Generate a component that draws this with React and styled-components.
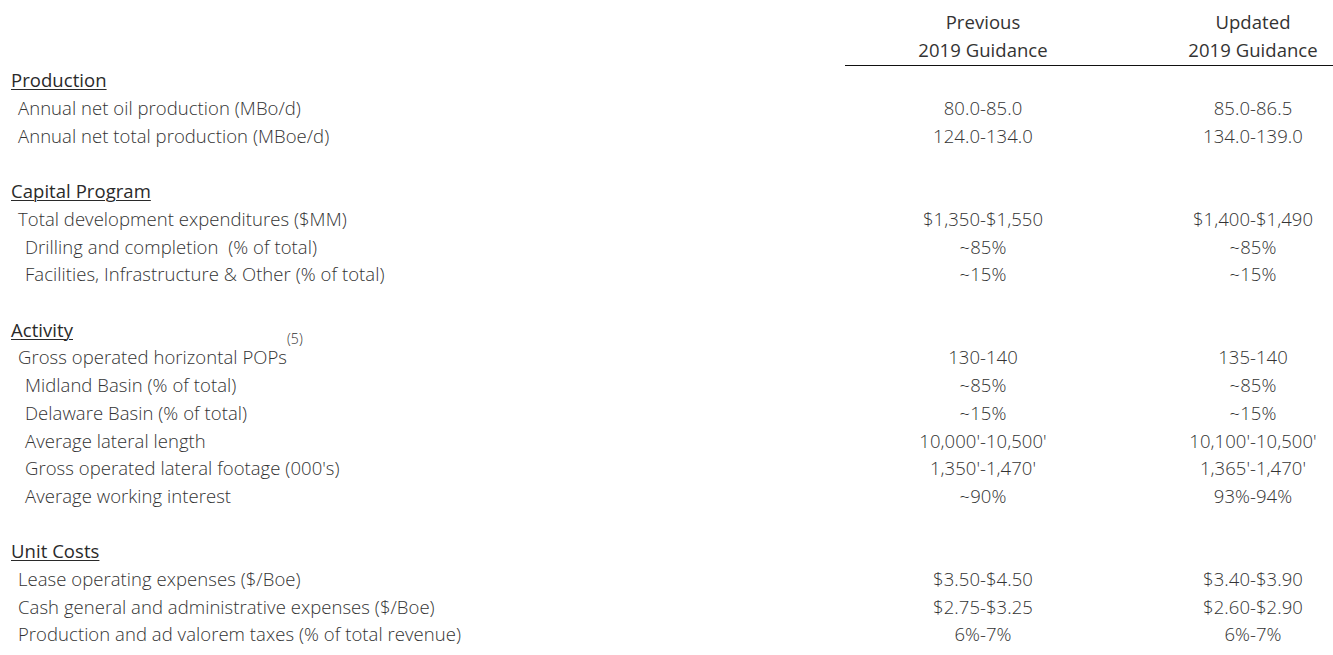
import React from "react";
import styled, { createGlobalStyle } from "styled-components";

const GlobalStyle = createGlobalStyle`
  html, body {
    margin: 0;
    padding: 0;
    background: #ffffff;
  }
  body {
    font-family: "Open Sans", "Liberation Sans", sans-serif;
    color: #333333;
  }
`;

const Sheet = styled.div`
  width: 1333px;
  height: 655px;
  overflow: hidden;
  padding-top: 8px;
  box-sizing: border-box;
`;

const Grid = styled.div`
  display: grid;
  grid-template-columns: 845px 276px 212px;
  font-size: 18.5px;
  line-height: 27.7px;
  font-weight: 300;
  letter-spacing: 0.05px;
`;

const HeadCell = styled.div`
  grid-column: ${(p) => p.$col};
  text-align: center;
  padding-left: ${(p) => (p.$shift ? "52px" : "0")};
  border-bottom: 1px solid #111111;
  padding-bottom: 2px;
  font-weight: 400;
`;

const HeadSpacer = styled.div`
  grid-column: 1;
`;

const Label = styled.div`
  grid-column: 1;
  padding-left: ${(p) => 11 + p.$level * 7}px;
  white-space: nowrap;
`;

const Section = styled(Label)`
  font-weight: 400;
  color: #2a2a2a;

  span {
    text-decoration: underline;
    text-underline-offset: 2px;
    text-decoration-thickness: 1px;
  }
`;

const Value = styled.div`
  grid-column: ${(p) => p.$col};
  text-align: center;
  padding-left: ${(p) => (p.$shift ? "52px" : "0")};
  white-space: nowrap;
`;

const Blank = styled.div`
  grid-column: 1 / span 3;
  height: 27.7px;
`;

const Note = styled.sup`
  font-size: 14px;
  position: relative;
  top: -11px;
  margin-left: 0;
  vertical-align: top;
  line-height: 1;
`;

const sections = [
  {
    title: "Production",
    rows: [
      { label: "Annual net oil production (MBo/d)", level: 1, prev: "80.0-85.0", next: "85.0-86.5" },
      { label: "Annual net total production (MBoe/d)", level: 1, prev: "124.0-134.0", next: "134.0-139.0" },
    ],
  },
  {
    title: "Capital Program",
    rows: [
      { label: "Total development expenditures ($MM)", level: 1, prev: "$1,350-$1,550", next: "$1,400-$1,490" },
      { label: "Drilling and completion\u00a0 (% of total)", level: 2, prev: "~85%", next: "~85%" },
      { label: "Facilities, Infrastructure & Other (% of total)", level: 2, prev: "~15%", next: "~15%" },
    ],
  },
  {
    title: "Activity",
    rows: [
      { label: "Gross operated horizontal POPs", note: "(5)", level: 1, prev: "130-140", next: "135-140" },
      { label: "Midland Basin (% of total)", level: 2, prev: "~85%", next: "~85%" },
      { label: "Delaware Basin (% of total)", level: 2, prev: "~15%", next: "~15%" },
      { label: "Average lateral length", level: 2, prev: "10,000'-10,500'", next: "10,100'-10,500'" },
      { label: "Gross operated lateral footage (000's)", level: 2, prev: "1,350'-1,470'", next: "1,365'-1,470'" },
      { label: "Average working interest", level: 2, prev: "~90%", next: "93%-94%" },
    ],
  },
  {
    title: "Unit Costs",
    rows: [
      { label: "Lease operating expenses ($/Boe)", level: 1, prev: "$3.50-$4.50", next: "$3.40-$3.90" },
      { label: "Cash general and administrative expenses ($/Boe)", level: 1, prev: "$2.75-$3.25", next: "$2.60-$2.90" },
      { label: "Production and ad valorem taxes (% of total revenue)", level: 1, prev: "6%-7%", next: "6%-7%" },
    ],
  },
];

export default function App() {
  return (
    <>
      <GlobalStyle />
      <Sheet>
        <Grid>
          <HeadSpacer />
          <HeadCell $col={2}>
            Previous
            <br />
            2019 Guidance
          </HeadCell>
          <HeadCell $col={3} $shift>
            Updated
            <br />
            2019 Guidance
          </HeadCell>
          {sections.map((s, si) => (
            <React.Fragment key={s.title}>
              {si > 0 && <Blank />}
              <Section $level={0}>
                <span>{s.title}</span>
              </Section>
              <Value $col={2} />
              <Value $col={3} />
              {s.rows.map((r) => (
                <React.Fragment key={r.label}>
                  <Label $level={r.level}>
                    {r.label}
                    {r.note && <Note>{r.note}</Note>}
                  </Label>
                  <Value $col={2}>{r.prev}</Value>
                  <Value $col={3} $shift>
                    {r.next}
                  </Value>
                </React.Fragment>
              ))}
            </React.Fragment>
          ))}
        </Grid>
      </Sheet>
    </>
  );
}
